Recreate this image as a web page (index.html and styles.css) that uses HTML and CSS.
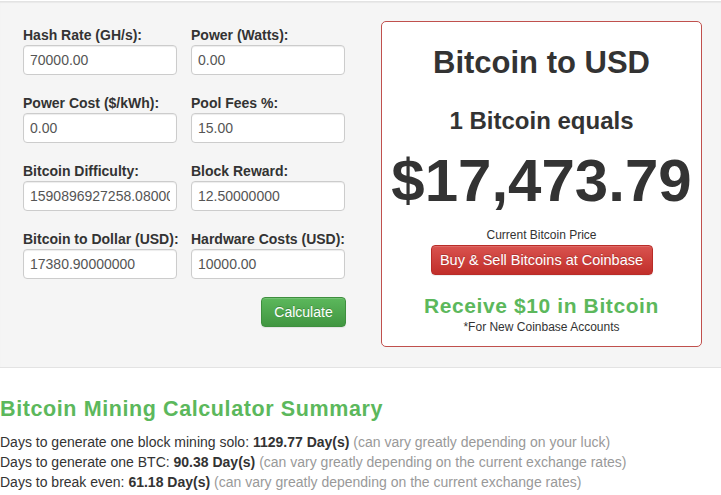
FILE: index.html
```html
<!DOCTYPE html>
<html lang="en">
<head>
  <meta charset="UTF-8" />
  <meta name="viewport" content="width=device-width, initial-scale=1.0"/>
  <title>Bitcoin Mining Calculator</title>
  <link rel="stylesheet" href="styles.css">
</head>
<body>
  <div class="calc-well">
    <div class="calc">
      <div class="fields">
        <div class="field">
          <label for="hashRate">Hash Rate (GH/s):</label>
          <input type="text" id="hashRate" value="70000.00" />
        </div>
        <div class="field">
          <label for="power">Power (Watts):</label>
          <input type="text" id="power" value="0.00" />
        </div>
        <div class="field">
          <label for="powerCost">Power Cost ($/kWh):</label>
          <input type="text" id="powerCost" value="0.00" />
        </div>
        <div class="field">
          <label for="poolFees">Pool Fees %:</label>
          <input type="text" id="poolFees" value="15.00" />
        </div>
        <div class="field">
          <label for="difficulty">Bitcoin Difficulty:</label>
          <input type="text" id="difficulty" value="1590896927258.08000000" />
        </div>
        <div class="field">
          <label for="reward">Block Reward:</label>
          <input type="text" id="reward" value="12.50000000" />
        </div>
        <div class="field">
          <label for="btcUsd">Bitcoin to Dollar (USD):</label>
          <input type="text" id="btcUsd" value="17380.90000000" />
        </div>
        <div class="field">
          <label for="hardware">Hardware Costs (USD):</label>
          <input type="text" id="hardware" value="10000.00" />
        </div>
      </div>
      <div class="actions">
        <button class="btn btn-green">Calculate</button>
      </div>
    </div>

    <div class="price-box">
      <h2>Bitcoin to USD</h2>
      <h3>1 Bitcoin equals</h3>
      <div class="price">$17,473.79</div>
      <p class="small">Current Bitcoin Price</p>
      <button class="btn btn-red">Buy &amp; Sell Bitcoins at Coinbase</button>
      <p class="promo">Receive $10 in Bitcoin</p>
      <p class="small note">*For New Coinbase Accounts</p>
    </div>
  </div>

  <div class="summary">
    <h2>Bitcoin Mining Calculator Summary</h2>
    <p>Days to generate one block mining solo: <b>1129.77 Day(s)</b> <span class="muted">(can vary greatly depending on your luck)</span></p>
    <p>Days to generate one BTC: <b>90.38 Day(s)</b> <span class="muted">(can vary greatly depending on the current exchange rates)</span></p>
    <p>Days to break even: <b>61.18 Day(s)</b> <span class="muted">(can vary greatly depending on the current exchange rates)</span></p>
  </div>
</body>
</html>
```

FILE: styles.css
```css
* { box-sizing: border-box; }

body {
  font-family: "Liberation Sans", Arial, Helvetica, sans-serif;
  font-size: 14px;
  color: #333;
  background: #fff;
  margin: 0;
}

.calc-well {
  display: flex;
  align-items: flex-start;
  margin-top: 1px;
  padding: 19px 19px 20px 23px;
  background: #f5f5f5;
  border-top: 1px solid #e3e3e3;
  border-bottom: 1px solid #e3e3e3;
  box-shadow: inset 0 1px 1px rgba(0, 0, 0, 0.05);
}

.calc {
  width: 323px;
  padding-top: 4px;
}

.fields {
  display: grid;
  grid-template-columns: 154px 154px;
  column-gap: 14px;
  row-gap: 18px;
}

.field label {
  display: block;
  font-weight: bold;
  font-size: 14px;
  line-height: 20px;
  white-space: nowrap;
}

.field input {
  display: block;
  width: 154px;
  height: 30px;
  padding: 0 6px;
  font-family: inherit;
  font-size: 14px;
  color: #555;
  background: #fff;
  border: 1px solid #ccc;
  border-radius: 4px;
  box-shadow: inset 0 1px 1px rgba(0, 0, 0, 0.075);
}

.actions {
  display: flex;
  justify-content: flex-end;
  margin-top: 18px;
}

.btn {
  height: 30px;
  font-family: inherit;
  font-size: 14px;
  color: #fff;
  border-radius: 4px;
  cursor: pointer;
  text-shadow: 0 -1px 0 rgba(0, 0, 0, 0.2);
  box-shadow: inset 0 1px 0 rgba(255, 255, 255, 0.15), 0 1px 1px rgba(0, 0, 0, 0.075);
}

.btn-green {
  width: 85px;
  background: linear-gradient(#5cb85c, #419641);
  border: 1px solid #3e8f3e;
}

.btn-red {
  width: 222px;
  font-size: 14.5px;
  background: linear-gradient(#d9534f, #c12e2a);
  border: 1px solid #b92c28;
}

.price-box {
  width: 321px;
  margin-left: 35px;
  padding: 24px 0 11px;
  text-align: center;
  background: #fff;
  border: 1px solid #c0504d;
  border-radius: 5px;
}

.price-box h2 {
  margin: 0;
  font-size: 31px;
  line-height: 34px;
}

.price-box h3 {
  margin: 27px 0 0;
  font-size: 24px;
  line-height: 28px;
}

.price {
  margin-top: 16px;
  font-size: 60px;
  font-weight: bold;
  line-height: 60px;
}

.price-box .small {
  margin: 0;
  font-size: 12px;
  line-height: 16px;
}

.price-box .price + .small {
  margin-top: 16px;
  margin-bottom: 2px;
}

.promo {
  margin: 20px 0 0;
  font-size: 21px;
  font-weight: bold;
  line-height: 22px;
  letter-spacing: 0.6px;
  color: #5cb85c;
}

.price-box .note {
  margin-top: 2px;
}

.summary {
  padding-top: 29px;
}

.summary h2 {
  margin: 0 0 11px;
  font-size: 21.5px;
  line-height: 24px;
  letter-spacing: 0.6px;
  color: #5cb85c;
}

.summary p {
  margin: 0;
  line-height: 20px;
}

.muted {
  color: #999;
}
```
